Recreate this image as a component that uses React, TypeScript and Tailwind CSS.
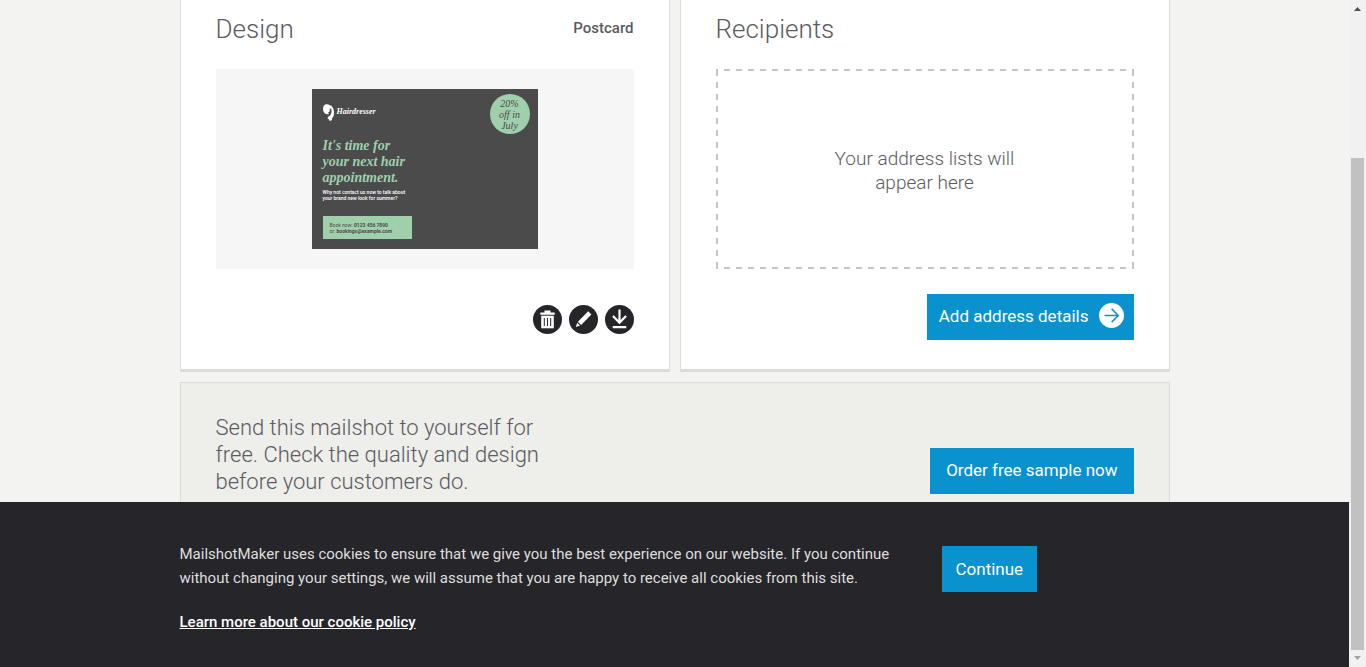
import type { ReactNode } from "react";

function RoundIconButton({ label, children }: { label: string; children: ReactNode }) {
  return (
    <button type="button" aria-label={label} className="size-[29px] cursor-pointer rounded-full">
      <svg viewBox="0 0 29 29" className="block size-full" aria-hidden="true">
        <circle cx="14.5" cy="14.5" r="14.5" fill="#26252a" />
        {children}
      </svg>
    </button>
  );
}

function Postcard() {
  return (
    <div className="flex h-40 w-[226px] justify-between bg-[#4b4b4b] pt-[5px] pr-2 pl-[11px]">
      <div className="flex flex-col items-start pt-[9px]">
        <div className="flex h-[18px] items-center gap-[3px] text-white">
          <svg viewBox="0 0 33 51" className="h-[17px] w-[11px]" aria-hidden="true">
            <path
              d="M13 1C5 0 0 6 0 14c0 8 3 13 9 16 4 2 8 1 9-1l-3-4 5-2 0-7 4-3c3 8 2 15-2 21-3 4-8 4-8 8 0 3 3 4 5 3-3 2-1 6 3 5 4 0 6-3 5-7 5-5 7-12 6-20C32 12 27 5 20 4 18 2 15 1 13 1Z"
              fill="#ffffff"
            />
          </svg>
          <span className="font-['Liberation_Serif',serif] text-[8px] leading-[10px] font-bold italic">Hairdresser</span>
        </div>
        <p className="mt-[17px] font-['Liberation_Serif',serif] text-[14px] leading-[16px] font-bold whitespace-nowrap text-[#9fd0ab] italic">
          It's time for
          <br />
          your next hair
          <br />
          appointment.
        </p>
        <p className="mt-[3px] font-['Roboto',sans-serif] text-[5px] leading-[6px] font-medium whitespace-nowrap text-white">
          Why not contact us now to talk about
          <br />
          your brand new look for summer?
        </p>
        <p className="mt-[15px] h-[23px] w-[89px] bg-[#9fd0ab] pt-[6px] pl-[7px] font-['Roboto',sans-serif] text-[5px] leading-[6px] whitespace-nowrap text-[#4b4b4b]">
          Book now: <b>0123 456 7890</b>
          <br />
          or: <b>bookings@example.com</b>
        </p>
      </div>
      <p className="flex size-10 items-center justify-center rounded-full bg-[#9fd0ab] text-center font-['Liberation_Serif',serif] text-[10px] leading-[11px] text-[#4b4b4b] italic">
        20%
        <br />
        off in
        <br />
        July
      </p>
    </div>
  );
}

function DesignCard() {
  return (
    <section className="flex-1 border-x border-b-3 border-[#dbdbd9] bg-white px-[35px]">
      <div className="flex h-[69px] items-center justify-between pb-3">
        <h2 className="text-[26px] leading-8 font-light">Design</h2>
        <span className="text-[15px] font-medium">Postcard</span>
      </div>
      <div className="flex h-[200px] items-center justify-center bg-[#f6f6f6]">
        <Postcard />
      </div>
      <div className="flex h-[100px] items-center justify-end gap-[7px]">
        <RoundIconButton label="Delete design">
          <path d="M11.5 5.5h6v2h4.2v2.3H7.3V7.5h4.2Z" fill="#fff" />
          <path d="M8.2 10.7h12.6v12.6H8.2Z" fill="#fff" />
          <path d="M11.3 13v8M14.5 13v8M17.7 13v8" stroke="#26252a" strokeWidth="1" />
        </RoundIconButton>
        <RoundIconButton label="Edit design">
          <path d="M19.2 6.2 22.4 9.4 12.1 19.9 8.9 16.7Z" fill="#fff" />
          <path d="M8.2 17.7 11.1 20.6 6.8 22Z" fill="#fff" />
        </RoundIconButton>
        <RoundIconButton label="Download design">
          <path d="M14.5 4.5v13M7.9 11l6.6 6.6 6.6-6.6M7.7 22.2h13.6" fill="none" stroke="#fff" strokeWidth="2.2" />
        </RoundIconButton>
      </div>
    </section>
  );
}

function RecipientsCard() {
  return (
    <section className="flex-1 border-x border-b-3 border-[#dbdbd9] bg-white px-[35px]">
      <div className="flex h-[69px] items-center pb-3">
        <h2 className="text-[26px] leading-8 font-light">Recipients</h2>
      </div>
      <div className="flex h-[200px] items-center justify-center bg-[image:linear-gradient(90deg,#c3c6c9_50%,transparent_50%),linear-gradient(90deg,#c3c6c9_50%,transparent_50%),linear-gradient(#c3c6c9_50%,transparent_50%),linear-gradient(#c3c6c9_50%,transparent_50%)] bg-[size:12px_2px,12px_2px,2px_12px,2px_12px] bg-[position:8px_0,8px_100%,0_1px,100%_1px] [background-repeat:repeat-x,repeat-x,repeat-y,repeat-y]">
        <p className="pt-1 text-center text-[19px] leading-6 font-light">
          Your address lists will
          <br />
          appear here
        </p>
      </div>
      <div className="flex h-[100px] items-start justify-end pt-[25px]">
        <button
          type="button"
          className="flex h-[46px] cursor-pointer items-center gap-[10px] bg-[#0992ce] pr-[10px] pl-3 text-[17px] text-white"
        >
          Add address details
          <svg viewBox="0 0 25 25" className="mb-[3px] size-[25px]" aria-hidden="true">
            <circle cx="12.5" cy="12.5" r="12.5" fill="#fff" />
            <path d="M5.5 12.5h13.5M12.7 5.9l6.6 6.6-6.6 6.6" fill="none" stroke="#0992ce" strokeWidth="1.5" />
          </svg>
        </button>
      </div>
    </section>
  );
}

function CookieBanner() {
  return (
    <aside className="shrink-0 bg-[#26252a] px-4 pt-10 pb-[33px] text-[15px] leading-6">
      <div className="mx-auto flex max-w-[990px] items-start">
        <div className="w-[762px]">
          <p className="text-[#dededc]">
            MailshotMaker uses cookies to ensure that we give you the best experience on our website. If you continue
            <br />
            without changing your settings, we will assume that you are happy to receive all cookies from this site.
          </p>
          <a href="#cookies" className="mt-5 inline-block font-medium text-white underline">
            Learn more about our cookie policy
          </a>
        </div>
        <button type="button" className="mt-1 h-[46px] cursor-pointer bg-[#0992ce] px-[14px] text-[17px] text-white">
          Continue
        </button>
      </div>
    </aside>
  );
}

function Scrollbar() {
  return (
    <div className="flex w-[17px] shrink-0 flex-col items-center bg-[#f1f1f1]" aria-hidden="true">
      <svg viewBox="0 0 17 17" className="size-[17px] shrink-0">
        <path d="M5 11 8.5 7 12 11Z" fill="#505050" />
      </svg>
      <div className="w-[13px] grow-[141]" />
      <div className="w-[13px] grow-[492] bg-[#c1c1c1]" />
      <svg viewBox="0 0 17 17" className="size-[17px] shrink-0">
        <path d="M5 6 8.5 10 12 6Z" fill="#a3a3a3" />
      </svg>
    </div>
  );
}

export default function App() {
  return (
    <div className="flex h-screen bg-[#f3f3f1] font-['Roboto',sans-serif] text-[#5b5b60]">
      <div className="flex min-w-0 flex-1 flex-col">
        <main className="min-h-0 flex-1 overflow-hidden px-4">
          <div className="mx-auto max-w-[990px]">
            <div className="flex gap-[10px]">
              <DesignCard />
              <RecipientsCard />
            </div>
            <section className="mt-[10px] flex items-start justify-between border border-[#dbdbd9] bg-[#eeeeea] px-[35px] pt-[31px] pb-9">
              <p className="text-[22px] leading-[27px] font-light">
                Send this mailshot to yourself for
                <br />
                free. Check the quality and design
                <br />
                before your customers do.
              </p>
              <button
                type="button"
                className="mt-[34px] h-[46px] cursor-pointer bg-[#0992ce] px-4 text-[17px] text-white"
              >
                Order free sample now
              </button>
            </section>
          </div>
        </main>
        <CookieBanner />
      </div>
      <Scrollbar />
    </div>
  );
}
